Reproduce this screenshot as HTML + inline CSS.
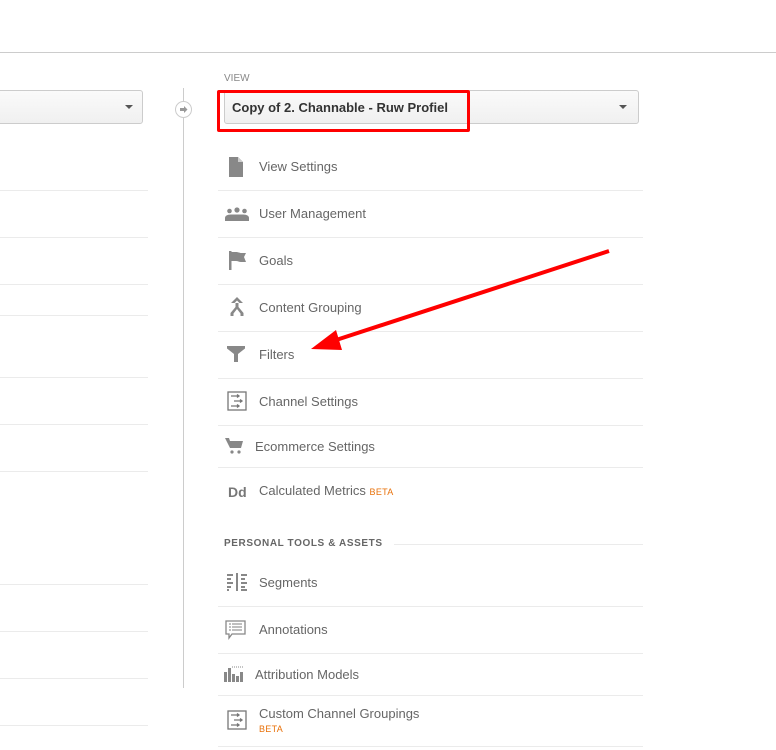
<!DOCTYPE html>
<html><head><meta charset="utf-8"><style>
html,body{margin:0;padding:0;background:#fff;width:776px;height:750px;overflow:hidden;position:relative;font-family:"Liberation Sans",Arial,sans-serif}
.a{position:absolute}
.hl{position:absolute;height:1px;background:#ebebeb}
.t{position:absolute;font-size:13px;color:#666;white-space:nowrap}
.beta{color:#e8710a;font-size:9px;letter-spacing:.3px}
svg.i{position:absolute}
</style></head><body>
<div class="hl" style="left:0;top:52px;width:776px;background:#ccc"></div>
<div class="a" style="left:-5px;top:90px;width:146px;height:32px;border:1px solid #ccc;border-radius:3px;background:linear-gradient(#fafafa,#f0f0f0)"></div>
<div class="a" style="left:125px;top:105px;width:0;height:0;border-left:4px solid transparent;border-right:4px solid transparent;border-top:4px solid #555"></div>
<div class="hl" style="left:0;top:190px;width:148px"></div>
<div class="hl" style="left:0;top:237px;width:148px"></div>
<div class="hl" style="left:0;top:284px;width:148px"></div>
<div class="hl" style="left:0;top:315px;width:148px"></div>
<div class="hl" style="left:0;top:377px;width:148px"></div>
<div class="hl" style="left:0;top:424px;width:148px"></div>
<div class="hl" style="left:0;top:471px;width:148px"></div>
<div class="hl" style="left:0;top:584px;width:148px"></div>
<div class="hl" style="left:0;top:631px;width:148px"></div>
<div class="hl" style="left:0;top:678px;width:148px"></div>
<div class="hl" style="left:0;top:725px;width:148px"></div>
<div class="a" style="left:183px;top:88px;width:1px;height:600px;background:#ccc"></div>
<div class="a" style="left:175px;top:101px;width:15px;height:15px;border:1px solid #ccc;border-radius:50%;background:#fff"></div>
<svg class="i" style="left:178px;top:104px" width="11" height="11" viewBox="0 0 11 11"><path d="M2 4h4V2l3.5 3.5L6 9V7H2z" fill="#999"/></svg>
<div class="t" style="left:224px;top:73px;font-size:10px;color:#888">VIEW</div>
<div class="a" style="left:224px;top:90px;width:413px;height:32px;border:1px solid #ccc;border-radius:3px;background:linear-gradient(#fafafa,#f0f0f0)"></div>
<div class="a" style="left:619px;top:105px;width:0;height:0;border-left:4px solid transparent;border-right:4px solid transparent;border-top:4px solid #555"></div>
<div class="a" style="left:217px;top:90px;width:247px;height:36px;border:3px solid #f00;border-radius:2px"></div>
<div class="t" style="left:232px;top:100px;font-weight:bold;color:#333">Copy of 2. Channable - Ruw Profiel</div>

<svg class="i" style="left:228px;top:157px" width="16" height="20" viewBox="0 0 16 20"><path d="M1 0h9l5 5v15H1z" fill="#888"/><path d="M10 0v5h5z" fill="#ccc"/></svg>
<div class="t" style="left:259px;top:159px">View Settings</div>
<div class="hl" style="left:218px;top:190px;width:425px"></div>

<svg class="i" style="left:225px;top:207px" width="24" height="14" viewBox="0 0 24 14"><circle cx="4.5" cy="4" r="2.3" fill="#888"/><circle cx="12" cy="3" r="2.6" fill="#888"/><circle cx="19.5" cy="4" r="2.3" fill="#888"/><path d="M0 14v-3c0-2 2-3.5 6-3.5h12c4 0 6 1.5 6 3.5v3z" fill="#888"/></svg>
<div class="t" style="left:259px;top:206px">User Management</div>
<div class="hl" style="left:218px;top:237px;width:425px"></div>

<svg class="i" style="left:228px;top:251px" width="20" height="19" viewBox="0 0 20 19"><path d="M1 0h2.5v19H1z" fill="#888"/><path d="M3.5 1h4c3 0 4 1 6 1h4.5l-2 4 2 5h-5c-2 0-3-1-5-1H3.5z" fill="#888"/></svg>
<div class="t" style="left:259px;top:253px">Goals</div>
<div class="hl" style="left:218px;top:284px;width:425px"></div>

<svg class="i" style="left:228px;top:297px" width="18" height="20" viewBox="0 0 18 20"><path d="M9 0l6 6h-3.5L9 3.5 6.5 6H3z M7.5 6h3v4l5 6v3h-3v-2.5L9 12l-3.5 4.5V19h-3v-3l5-6z" fill="#888"/></svg>
<div class="t" style="left:259px;top:300px">Content Grouping</div>
<div class="hl" style="left:218px;top:331px;width:425px"></div>

<svg class="i" style="left:227px;top:346px" width="18" height="16" viewBox="0 0 18 16"><path d="M0 0h18v2.5l-7 5.5v8H7V8L0 2.5z" fill="#888"/></svg>
<div class="t" style="left:259px;top:347px">Filters</div>
<div class="hl" style="left:218px;top:378px;width:425px"></div>

<svg class="i" style="left:227px;top:391px" width="20" height="20" viewBox="0 0 20 20"><rect x="1" y="1" width="18" height="18" fill="none" stroke="#777" stroke-width="1.3"/><path d="M4 5h8M10 3.5l2 1.5-2 1.5M7 10h8M13 8.5l2 1.5-2 1.5M4 15h8M10 13.5l2 1.5-2 1.5" stroke="#777" stroke-width="1.3" fill="none"/></svg>
<div class="t" style="left:259px;top:394px">Channel Settings</div>
<div class="hl" style="left:218px;top:425px;width:425px"></div>

<svg class="i" style="left:225px;top:438px" width="18" height="16" viewBox="0 0 18 16"><path d="M0 0h4l1 3h13l-2 7H5z" fill="#888"/><circle cx="7" cy="14" r="1.6" fill="#888"/><circle cx="14" cy="14" r="1.6" fill="#888"/></svg>
<div class="t" style="left:255px;top:439px">Ecommerce Settings</div>
<div class="hl" style="left:218px;top:467px;width:425px"></div>

<div class="t" style="left:228px;top:484px;font-weight:bold;color:#777;font-size:14px">Dd</div>
<div class="t" style="left:259px;top:483px">Calculated Metrics <span class="beta">BETA</span></div>

<div class="t" style="left:224px;top:538px;font-size:10px;font-weight:bold;color:#666;letter-spacing:.6px">PERSONAL TOOLS &amp; ASSETS</div>
<div class="hl" style="left:394px;top:544px;width:249px"></div>

<svg class="i" style="left:227px;top:573px" width="22" height="18" viewBox="0 0 22 18"><path d="M0 1h6v2H0zM0 5h4v2H0zM0 9h6v2H0zM0 13h4v2H0zM0 16h2v2H0z M9 0h2v18H9z M14 1h6v2h-6zM14 5h4v2h-4zM14 9h6v2h-6zM14 13h4v2h-4zM14 16h6v2h-6z" fill="#888"/></svg>
<div class="t" style="left:259px;top:575px">Segments</div>
<div class="hl" style="left:218px;top:606px;width:425px"></div>

<svg class="i" style="left:225px;top:620px" width="21" height="20" viewBox="0 0 21 20"><path d="M1 1h19v13H7l-3 4v-4H1z" fill="#fff" stroke="#888" stroke-width="1.3"/><path d="M4 4h2M7 4h10M4 7h2M7 7h10M4 10h2M7 10h10" stroke="#999" stroke-width="1.2"/></svg>
<div class="t" style="left:259px;top:622px">Annotations</div>
<div class="hl" style="left:218px;top:653px;width:425px"></div>

<svg class="i" style="left:224px;top:666px" width="20" height="16" viewBox="0 0 20 16"><path d="M0 6h3v10H0zM4 2h3v14H4zM8 8h3v8H8zM12 10h3v6h-3zM16 6h3v10h-3z" fill="#888"/><path d="M8 1h1M10 1h1M12 1h1M14 1h1M16 1h1M18 1h1" stroke="#888"/></svg>
<div class="t" style="left:255px;top:667px">Attribution Models</div>
<div class="hl" style="left:218px;top:695px;width:425px"></div>

<svg class="i" style="left:227px;top:710px" width="20" height="20" viewBox="0 0 20 20"><rect x="1" y="1" width="18" height="18" fill="none" stroke="#777" stroke-width="1.3"/><path d="M4 5h8M10 3.5l2 1.5-2 1.5M7 10h8M13 8.5l2 1.5-2 1.5M4 15h8M10 13.5l2 1.5-2 1.5" stroke="#777" stroke-width="1.3" fill="none"/></svg>
<div class="t" style="left:259px;top:706px">Custom Channel Groupings</div>
<div class="t beta" style="left:259px;top:724px">BETA</div>
<div class="hl" style="left:218px;top:746px;width:425px"></div>

<svg class="a" style="left:0;top:0" width="776" height="750"><line x1="609" y1="251" x2="330" y2="342" stroke="#f00" stroke-width="4"/><polygon points="311,349 336,330 342,350" fill="#f00"/></svg>
</body></html>
